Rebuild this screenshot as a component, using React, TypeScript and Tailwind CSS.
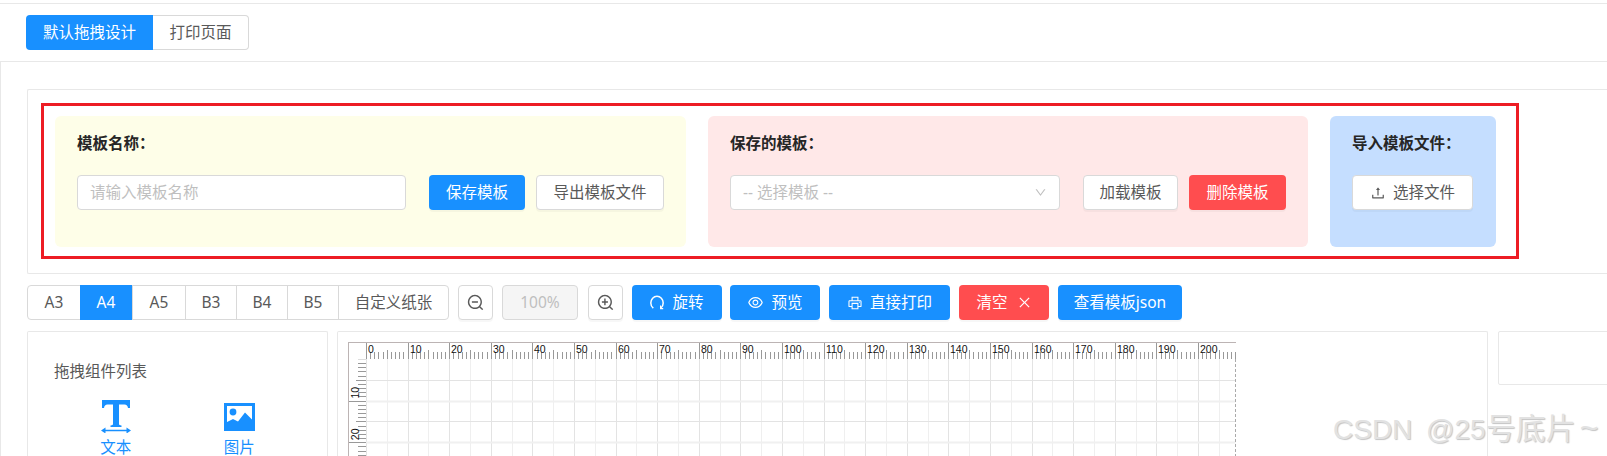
import { AiOutlineClose, AiOutlineDown, AiOutlineEye, AiOutlinePrinter, AiOutlineUpload, AiOutlineZoomIn, AiOutlineZoomOut } from "react-icons/ai";
import type { ReactNode } from "react";

const PAPERS = ["A3", "A4", "A5", "B3", "B4", "B5", "自定义纸张"];
const PAPER_W = ["w-[52px]", "w-[52px]", "w-[53px]", "w-[51px]", "w-[51px]", "w-[51px]", "w-[110px]"];

const MM = 4.16;
const RULER_X = 18;
const RULER_Y = 17;
const RULER_W = 888;
const RULER_H = 114;

function Btn({ kind = "default", className = "", children }: { kind?: "default" | "primary" | "danger"; className?: string; children: ReactNode }) {
  const tone =
    kind === "primary"
      ? "bg-[#1890ff] text-white"
      : kind === "danger"
        ? "bg-[#ff4d4f] text-white"
        : "bg-white text-[#595959] border border-[#d9d9d9]";
  return (
    <button className={`h-[35px] rounded-[4px] flex items-center justify-center text-[15.5px] shadow-[0_2px_0_rgba(0,0,0,0.03)] ${tone} ${className}`}>
      {children}
    </button>
  );
}

function Ruler() {
  const cols = [];
  const rows = [];
  const hTicks = [];
  const vTicks = [];
  const labels = [];
  for (let i = 0; i <= 41; i++) {
    const x = RULER_X + Math.round(i * 5 * MM) + 0.5;
    cols.push(<line key={i} x1={x} x2={x} y1={RULER_Y} y2={RULER_H} stroke={i % 2 ? "#efefef" : "#e3e3e3"} />);
  }
  for (let i = 1; i <= 5; i++) {
    const y = RULER_Y + Math.round(i * 5 * MM) + 0.5;
    rows.push(<line key={i} x1={RULER_X} x2={RULER_W - 0.5} y1={y} y2={y} stroke={i % 2 ? "#e3e3e3" : "#f0f0f0"} strokeWidth={i % 2 ? 1 : 2} />);
  }
  for (let i = 0; i <= 209; i++) {
    const x = RULER_X + Math.round(i * MM) + 0.5;
    const top = i % 10 === 0 ? 0 : i % 5 === 0 ? 8 : 10;
    hTicks.push(<line key={i} x1={x} x2={x} y1={top} y2={RULER_Y} stroke="#999" />);
  }
  for (let i = 1; i <= 23; i++) {
    const y = RULER_Y + Math.round(i * MM) + 0.5;
    const left = i % 10 === 0 ? 0 : i % 5 === 0 ? 8 : 10;
    vTicks.push(<line key={i} x1={left} x2={RULER_X} y1={y} y2={y} stroke="#999" />);
  }
  for (let i = 0; i <= 20; i++) {
    const x = RULER_X + Math.round(i * 10 * MM) + 2;
    labels.push(
      <text key={i} x={x} y={11} fontSize={10.5} fill="#111" fontFamily="'Liberation Sans', sans-serif">
        {i * 10}
      </text>,
    );
  }
  return (
    <svg width={RULER_W} height={RULER_H} className="block">
      {cols}
      {rows}
      {hTicks}
      {vTicks}
      <line x1={10} x2={RULER_X} y1={RULER_Y + 0.5} y2={RULER_Y + 0.5} stroke="#ddd" />
      <line x1={0} x2={RULER_W} y1={0.5} y2={0.5} stroke="#bcb4b4" />
      <line x1={0.5} x2={0.5} y1={0} y2={RULER_H} stroke="#bcb4b4" />
      <line x1={RULER_W - 0.5} x2={RULER_W - 0.5} y1={RULER_Y} y2={RULER_H} stroke="#aaa" strokeDasharray="3 2" />
      {labels}
      <text x={11} y={RULER_Y + 10 * MM - 2} fontSize={10.5} fill="#111" fontFamily="'Liberation Sans', sans-serif" transform={`rotate(-90 11 ${RULER_Y + 10 * MM - 2})`}>
        10
      </text>
      <text x={11} y={RULER_Y + 20 * MM - 2} fontSize={10.5} fill="#111" fontFamily="'Liberation Sans', sans-serif" transform={`rotate(-90 11 ${RULER_Y + 20 * MM - 2})`}>
        20
      </text>
    </svg>
  );
}

function RotateIcon() {
  return (
    <svg width="14" height="15" viewBox="0 0 14 15" fill="none" stroke="currentColor" strokeWidth="1.5">
      <path d="M3.300 13.200C1.800 12 .8 10.100.8 8 .8 4.300 3.600 1.300 7 1.300s6.200 3 6.200 6.700c0 2.100-1 4-2.500 5.200" />
      <path d="M10.600 10.600v3h2.600" strokeWidth="1.200" />
    </svg>
  );
}

function TextIcon() {
  return (
    <svg width="30" height="33" viewBox="0 0 30 33" fill="#1890ff">
      <path d="M1 0h28v8h-2c-.3-2.400-1.400-3.600-3.500-3.600H18v19.400c0 1 .6 1.500 2.500 1.700V27h-11v-1.500c1.900-.2 2.500-.7 2.500-1.700V4.400H6.500C4.400 4.400 3.300 5.600 3 8H1z" />
      <path d="M0 30.500l4.500-3v2.300h21v-2.300l4.500 3-4.500 3v-2.300h-21v2.300z" />
    </svg>
  );
}

function ImageIcon() {
  return (
    <svg width="31" height="28" viewBox="0 0 31 28">
      <rect width="31" height="28" fill="#1890ff" />
      <rect x="3" y="3" width="25" height="18" fill="#fff" />
      <circle cx="9" cy="9" r="3.400" fill="#1890ff" />
      <path d="M3 19l6-3 5 2.500 7-9 7 7V24H3z" fill="#1890ff" />
    </svg>
  );
}

export default function App() {
  return (
    <div className="relative h-[456px] w-[1607px] overflow-hidden bg-white font-['Noto_Sans','Noto_Sans_CJK_SC',sans-serif] text-[15.5px] text-[#595959]">
      <div className="mt-[3px] border-t border-[#e8e8e8]" />

      <div className="ml-[26px] mt-[11px] flex h-[35px] w-[223px]">
        <div className="flex w-[127px] items-center justify-center rounded-l-[4px] bg-[#1890ff] text-white">默认拖拽设计</div>
        <div className="flex w-[96px] items-center justify-center rounded-r-[4px] border border-l-0 border-[#d9d9d9]">打印页面</div>
      </div>

      <div className="mt-[11px] border-l border-t border-[#e8e8e8] pl-[26px] pt-[27px]">
        {/* config card */}
        <div className="rounded-l-[2px] border-y border-l border-[#e8e8e8] pb-[14px] pl-[13px] pt-[13px]">
          <div className="flex h-[156px] w-[1478px] gap-[22px] border-[3px] border-[#ed1c24] pl-[11px] pt-[10px]">
            <section className="h-[131px] w-[631px] rounded-[6px] bg-[#fefee8] pl-[22px] pt-[17px]">
              <div className="font-bold leading-[20px] text-[#262626]">模板名称：</div>
              <div className="mt-[22px] flex">
                <div className="flex h-[35px] w-[329px] items-center rounded-[4px] border border-[#d9d9d9] bg-white pl-[12px] text-[#bfbfbf]">请输入模板名称</div>
                <Btn kind="primary" className="ml-[23px] w-[96px]">保存模板</Btn>
                <Btn className="ml-[11px] w-[128px]">导出模板文件</Btn>
              </div>
            </section>

            <section className="h-[131px] w-[600px] rounded-[6px] bg-[#ffe8e8] pl-[22px] pt-[17px]">
              <div className="font-bold leading-[20px] text-[#262626]">保存的模板：</div>
              <div className="mt-[22px] flex">
                <div className="flex h-[35px] w-[330px] items-center justify-between rounded-[4px] border border-[#d9d9d9] bg-white pl-[12px] pr-[12px] text-[#bfbfbf]">
                  <span>-- 选择模板 --</span>
                  <AiOutlineDown size={13} />
                </div>
                <Btn className="ml-[23px] w-[95px]">加载模板</Btn>
                <Btn kind="danger" className="ml-[11px] w-[97px]">删除模板</Btn>
              </div>
            </section>

            <section className="h-[131px] w-[166px] rounded-[6px] bg-[#c5deff] pl-[22px] pt-[17px]">
              <div className="whitespace-nowrap font-bold leading-[20px] text-[#262626]">导入模板文件：</div>
              <div className="mt-[22px]">
                <Btn className="w-[121px] gap-[7px]">
                  <AiOutlineUpload size={16} />
                  选择文件
                </Btn>
              </div>
            </section>
          </div>
        </div>

        {/* toolbar */}
        <div className="mt-[11px] flex h-[35px] items-stretch">
          <div className="flex rounded-[4px] border border-[#d9d9d9]">
            {PAPERS.map((p, i) => (
              <div
                key={p}
                className={`flex items-center justify-center border-[#d9d9d9] ${PAPER_W[i]} ${i > 1 ? "border-l" : ""} ${p === "A4" ? "-my-px bg-[#1890ff] text-white" : ""}`}
              >
                {p}
              </div>
            ))}
          </div>
          <Btn className="ml-[9px] w-[35px]"><AiOutlineZoomOut size={19} /></Btn>
          <div className="ml-[9px] flex w-[76px] items-center justify-center rounded-[4px] border border-[#d9d9d9] bg-[#f5f5f5] text-[#bfbfbf]">100%</div>
          <Btn className="ml-[10px] w-[35px]"><AiOutlineZoomIn size={19} /></Btn>
          <Btn kind="primary" className="ml-[9px] w-[90px] gap-[8px]"><RotateIcon />旋转</Btn>
          <Btn kind="primary" className="ml-[8px] w-[90px] gap-[7px]"><AiOutlineEye size={17} />预览</Btn>
          <Btn kind="primary" className="ml-[9px] w-[121px] gap-[7px]"><AiOutlinePrinter size={16} />直接打印</Btn>
          <Btn kind="danger" className="ml-[9px] w-[90px] gap-[9px]">清空<AiOutlineClose size={15} /></Btn>
          <Btn kind="primary" className="ml-[9px] w-[124px]">查看模板json</Btn>
        </div>

        {/* panels */}
        <div className="mt-[11px] flex items-start">
          <div className="h-[125px] w-[301px] shrink-0 rounded-t-[2px] border border-b-0 border-[#e8e8e8] pl-[26px] pt-[29px]">
            <div className="leading-[20px]">拖拽组件列表</div>
            <div className="mt-[19px] grid w-[247px] grid-cols-2 text-[#1890ff]">
              <div className="flex flex-col items-center">
                <TextIcon />
                <span className="mt-[6px] leading-[16px]">文本</span>
              </div>
              <div className="flex flex-col items-center pt-[3px]">
                <ImageIcon />
                <span className="mt-[8px] leading-[16px]">图片</span>
              </div>
            </div>
          </div>
          <div className="ml-[9px] h-[125px] w-[1151px] shrink-0 rounded-t-[2px] border border-b-0 border-[#e8e8e8] pl-[10px] pt-[10px]">
            <Ruler />
          </div>
          <div className="ml-[10px] h-[54px] w-[200px] shrink-0 rounded-l-[2px] border border-[#e8e8e8]" />
        </div>
      </div>

      <div className="absolute left-[1333px] top-[410px] whitespace-nowrap font-['Liberation_Sans','Noto_Sans_CJK_SC',sans-serif] text-[28px] leading-[36px] text-[#e2e2e2] [text-shadow:1px_1px_1px_#c4c4c4] [word-spacing:6px]">
        CSDN @25<span className="text-[30px]">号底片</span><span className="ml-[4px] text-[32px]">~</span>
      </div>
    </div>
  );
}
